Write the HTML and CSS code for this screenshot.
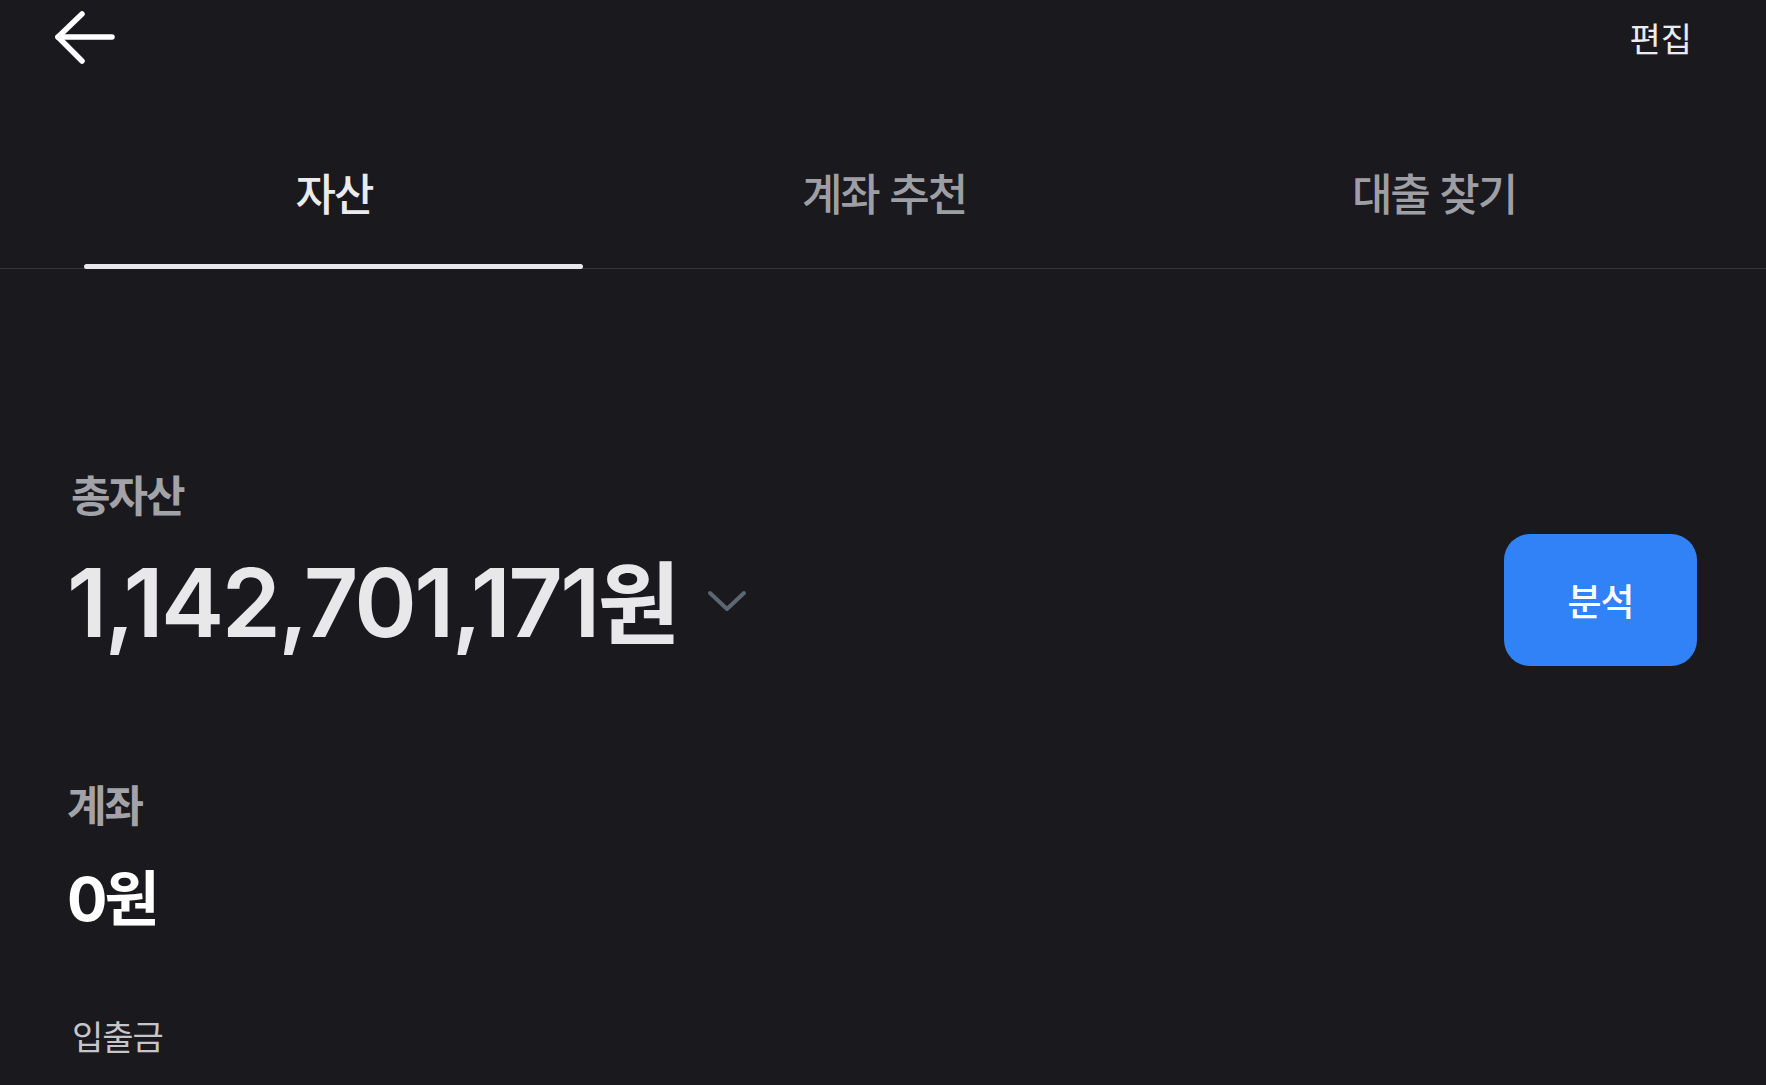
FILE: index.html
```
<!DOCTYPE html>
<html lang="ko">
<head>
<meta charset="utf-8">
<title>자산</title>
<link rel="stylesheet" href="styles.css">
</head>
<body>
<div class="app">
  <header class="topbar">
    <button class="back" aria-label="뒤로">
      <svg width="60" height="54" viewBox="0 0 60 54" fill="none" stroke="#ffffff" stroke-width="5.5" stroke-linecap="round" stroke-linejoin="round">
        <path d="M57 26H3"/>
        <path d="M27 3L3 26L27 50"/>
      </svg>
    </button>
    <span class="edit">편집</span>
  </header>

  <nav class="tabs">
    <div class="tab active">자산</div>
    <div class="tab">계좌 추천</div>
    <div class="tab">대출 찾기</div>
  </nav>

  <main class="content">
    <section class="total">
      <div class="label">총자산</div>
      <div class="total-row">
        <div class="amount-wrap">
          <span class="amount">1,142,701,171<span class="won">원</span></span>
          <svg class="chevron" width="40" height="24" viewBox="0 0 40 24" fill="none" stroke="#5d6773" stroke-width="4" stroke-linecap="round" stroke-linejoin="round">
            <path d="M3 4L20 20L37 4"/>
          </svg>
        </div>
        <button class="analyze">분석</button>
      </div>
    </section>

    <section class="accounts">
      <div class="label">계좌</div>
      <div class="sub-amount">0원</div>
      <div class="group">입출금</div>
    </section>
  </main>
</div>
</body>
</html>
```

FILE: styles.css
```
* { box-sizing: border-box; }

html, body {
  margin: 0;
  padding: 0;
  background: #1a191e;
}

body {
  font-family: "Noto Sans CJK KR", "Noto Sans", sans-serif;
  color: #e6e6e8;
  width: 1766px;
  height: 1085px;
  overflow: hidden;
}

.topbar {
  height: 76px;
  display: flex;
  align-items: center;
  justify-content: space-between;
  padding: 0 74px 0 55px;
}

.back {
  background: none;
  border: 0;
  padding: 0;
  display: flex;
  cursor: pointer;
}

.edit {
  font-size: 34px;
  line-height: 40px;
  color: #ececee;
  font-weight: 400;
  letter-spacing: 0;
}

.tabs {
  display: flex;
  padding: 0 57px 0 59px;
  border-bottom: 1px solid #34343a;
}

.tab {
  flex: 1;
  position: relative;
  text-align: center;
  font-size: 44px;
  line-height: 50px;
  padding: 91px 0 51px;
  color: #9e9ea5;
  font-weight: 500;
  letter-spacing: -2px;
}

.tab.active {
  color: #ebebed;
}

.tab.active::after {
  content: "";
  position: absolute;
  left: 25px;
  right: 26px;
  bottom: -1px;
  height: 5px;
  border-radius: 3px;
  background: #e8e8ea;
}

.content {
  padding: 0 69px 0 67px;
}

.total {
  padding-top: 199px;
}

.label {
  font-size: 43px;
  line-height: 50px;
  font-weight: 700;
  color: #a2a2a9;
  letter-spacing: -2px;
}

.total .label {
  padding-left: 4px;
}

.total-row {
  display: flex;
  align-items: center;
  justify-content: space-between;
  margin-top: 16px;
}

.amount-wrap {
  display: flex;
  align-items: center;
  gap: 26px;
}

.amount {
  font-family: "Inter", "Noto Sans CJK KR", sans-serif;
  font-size: 95px;
  line-height: 106px;
  font-weight: 600;
  color: #e8e8ea;
  letter-spacing: -2.7px;
}

.won {
  font-family: "Noto Sans CJK KR", sans-serif;
  font-weight: 700;
  font-size: 90px;
  letter-spacing: 0;
}

.chevron {
  margin-top: 2px;
}

.analyze {
  width: 193px;
  height: 132px;
  border: 0;
  border-radius: 26px;
  background: #3182f6;
  color: #ffffff;
  font-family: "Noto Sans CJK KR", sans-serif;
  font-size: 37px;
  font-weight: 500;
  letter-spacing: -1px;
  cursor: pointer;
}

.accounts {
  padding-top: 112px;
}

.sub-amount {
  margin-top: 36px;
  font-family: "Inter", "Noto Sans CJK KR", sans-serif;
  font-size: 60px;
  line-height: 70px;
  font-weight: 700;
  color: #ffffff;
  letter-spacing: -3px;
}

.group {
  margin-top: 82px;
  padding-left: 5px;
  font-size: 34px;
  line-height: 40px;
  font-weight: 400;
  color: #c6c6ca;
  letter-spacing: -1px;
}
```
